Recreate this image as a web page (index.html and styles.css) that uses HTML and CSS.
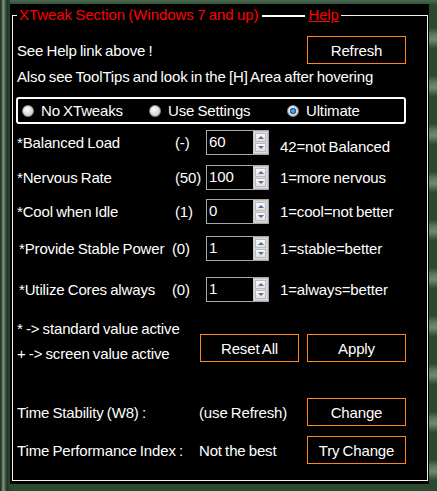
FILE: index.html
```html
<!DOCTYPE html>
<html lang="en">
<head>
<meta charset="utf-8">
<title>XTweak Section</title>
<link rel="stylesheet" href="styles.css">
</head>
<body>
<div class="panel">
  <fieldset class="section">
    <legend class="legend"><span class="title">XTweak Section (Windows 7 and up)</span><span class="rule"></span><a class="help" href="#">Help</a></legend>

    <div class="row-top">
      <span>See Help link above !</span>
      <button class="btn">Refresh</button>
    </div>
    <p class="note">Also see ToolTips and look in the [H] Area after hovering</p>

    <div class="modes">
      <label class="mode m1"><span class="radio"></span>No XTweaks</label>
      <label class="mode m2"><span class="radio"></span>Use Settings</label>
      <label class="mode m3"><span class="radio checked"></span>Ultimate</label>
    </div>

    <div class="setting s1">
      <span class="name">*Balanced Load</span>
      <span class="def">(-)</span>
      <div class="spin"><span class="val">60</span><span class="spinner"><span class="up"></span><span class="down"></span></span></div>
      <span class="hint low">42=not Balanced</span>
    </div>
    <div class="setting s2">
      <span class="name">*Nervous Rate</span>
      <span class="def">(50)</span>
      <div class="spin"><span class="val">100</span><span class="spinner"><span class="up"></span><span class="down"></span></span></div>
      <span class="hint">1=more nervous</span>
    </div>
    <div class="setting s3">
      <span class="name">*Cool when Idle</span>
      <span class="def">(1)</span>
      <div class="spin"><span class="val">0</span><span class="spinner"><span class="up"></span><span class="down"></span></span></div>
      <span class="hint">1=cool=not better</span>
    </div>
    <div class="setting s4 indent">
      <span class="name">*Provide Stable Power</span>
      <span class="def">(0)</span>
      <div class="spin"><span class="val">1</span><span class="spinner"><span class="up"></span><span class="down"></span></span></div>
      <span class="hint">1=stable=better</span>
    </div>
    <div class="setting s5 indent">
      <span class="name">*Utilize Cores always</span>
      <span class="def">(0)</span>
      <div class="spin"><span class="val">1</span><span class="spinner"><span class="up"></span><span class="down"></span></span></div>
      <span class="hint">1=always=better</span>
    </div>

    <div class="footer">
      <div class="notes">
        <p>* -&gt; standard value active</p>
        <p>+ -&gt; screen value active</p>
      </div>
      <div class="actions">
        <button class="btn">Reset All</button>
        <button class="btn">Apply</button>
      </div>
    </div>

    <div class="time t1">
      <span class="tname">Time Stability (W8) :</span>
      <span class="tval">(use Refresh)</span>
      <button class="btn">Change</button>
    </div>
    <div class="time t2">
      <span class="tname">Time Performance Index :</span>
      <span class="tval">Not the best</span>
      <button class="btn">Try Change</button>
    </div>
  </fieldset>
</div>
</body>
</html>
```

FILE: styles.css
```css
html, body {
  margin: 0;
  padding: 0;
}
body {
  width: 437px;
  height: 491px;
  overflow: hidden;
  font-family: "Liberation Sans", Arial, sans-serif;
  font-size: 15px;
  letter-spacing: -0.15px;
  word-spacing: -0.8px;
  color: #ffffff;
  background-color: #2a4630;
  background-image:
    linear-gradient(to right, #1c3020 0, #3a5540 2px, #8d9c8c 3px, #4d6650 5px, #1f3524 7px, #2b4a30 10px, transparent 10px),
    linear-gradient(to bottom, #4b6a50 0, #34523a 4px, transparent 4px),
    repeating-linear-gradient(to bottom, #2a4a2f 0, #2a4a2f 28px, #5a7a5d 34px, #6d8a6e 40px, #2c4b31 48px);
  background-size: 10px 100%, 100% 100%, 100% 100%;
  background-repeat: no-repeat, no-repeat, repeat;
}

.panel {
  margin: 4px 8px 0 10px;
  width: 419px;
  height: 480px;
  background: #000000;
  padding-top: 2px;
  box-sizing: border-box;
}

.section {
  margin: 0 1px 0 2px;
  padding: 12px 21px 0 4px;
  height: 475px;
  box-sizing: border-box;
  border: 1px solid #f2f2f2;
  min-width: 0;
}

.legend {
  display: flex;
  align-items: center;
  padding: 0 2px;
  margin: 0;
  height: 18px;
  line-height: 18px;
}
.title {
  color: #ff0000;
  letter-spacing: -0.05px;
}
.rule {
  display: block;
  width: 43px;
  height: 2px;
  background: #ffffff;
  margin: 1px 3px 0 4px;
}
.help {
  color: #ff0000;
  text-decoration: underline;
}

.btn {
  box-sizing: border-box;
  width: 99px;
  height: 28px;
  padding: 0;
  background: #000000;
  border: 1px solid #ff8613;
  color: #ffffff;
  font-family: inherit;
  font-size: 15px;
  letter-spacing: inherit;
  word-spacing: inherit;
}

.row-top {
  display: flex;
  align-items: center;
  justify-content: space-between;
  height: 28px;
}

.note {
  margin: 4px 0 0 0;
  line-height: 18px;
}

.modes {
  display: flex;
  align-items: center;
  box-sizing: border-box;
  height: 27px;
  margin: 11px 0 0 -1px;
  border: 2px solid #ffffff;
  border-radius: 3px;
  padding-left: 4px;
}
.mode {
  display: flex;
  align-items: center;
  gap: 7px;
}
.m1 { width: 127px; }
.m2 { width: 138px; }
.radio {
  display: inline-block;
  box-sizing: border-box;
  width: 12px;
  height: 12px;
  border-radius: 50%;
  border: 1px solid #8a8a8a;
  background: radial-gradient(circle at 40% 35%, #ffffff 0, #e4e4e4 40%, #bdbdbd 100%);
}
.radio.checked {
  background:
    radial-gradient(circle at 50% 50%, #6cc0f0 0, #2a7fc8 2px, #1a5a9a 3px, transparent 3.5px),
    radial-gradient(circle at 40% 35%, #ffffff 0, #e4e4e4 40%, #bdbdbd 100%);
}

.setting {
  display: flex;
  align-items: center;
  height: 25px;
}
.s1 { margin-top: 6px; }
.s2 { margin-top: 10px; }
.s3 { margin-top: 9px; }
.s4 { margin-top: 12px; }
.s5 { margin-top: 16px; }

.name { width: 158px; }
.def { width: 31px; }
.indent { padding-left: 2px; }
.indent .name { width: 153px; }
.indent .def { width: 34px; }

.spin {
  display: flex;
  box-sizing: border-box;
  width: 63px;
  height: 25px;
  border: 1px solid #a8a8a8;
  background: #000000;
}
.val {
  flex: 1;
  padding-left: 2px;
  line-height: 22px;
}
.spinner {
  display: flex;
  flex-direction: column;
  width: 15px;
  box-sizing: border-box;
  border: 1px solid #c9c9c9;
  background: #dcdcdc;
  padding: 1px;
  gap: 1px;
}
.up, .down {
  flex: 1;
  display: flex;
  align-items: center;
  justify-content: center;
  background: linear-gradient(#fafafa, #e2e2e2);
  border: 1px solid #b9b9b9;
}
.up::before, .down::before {
  content: "";
  width: 0;
  height: 0;
  border-left: 3px solid transparent;
  border-right: 3px solid transparent;
}
.up::before { border-bottom: 3px solid #4d6ea8; }
.down::before { border-top: 3px solid #4d6ea8; }

.hint { margin-left: 11px; }
.hint.low { margin-top: 8px; }

.footer {
  display: flex;
  justify-content: space-between;
  margin-top: 14px;
}
.notes p {
  margin: 0;
  line-height: 25px;
}
.actions {
  display: flex;
  gap: 8px;
  margin-top: 18px;
}

.time {
  display: flex;
  align-items: center;
  height: 28px;
}
.t1 { margin-top: 32px; }
.t2 { margin-top: 10px; }
.tname { width: 182px; }
.tval { width: 108px; }
```
